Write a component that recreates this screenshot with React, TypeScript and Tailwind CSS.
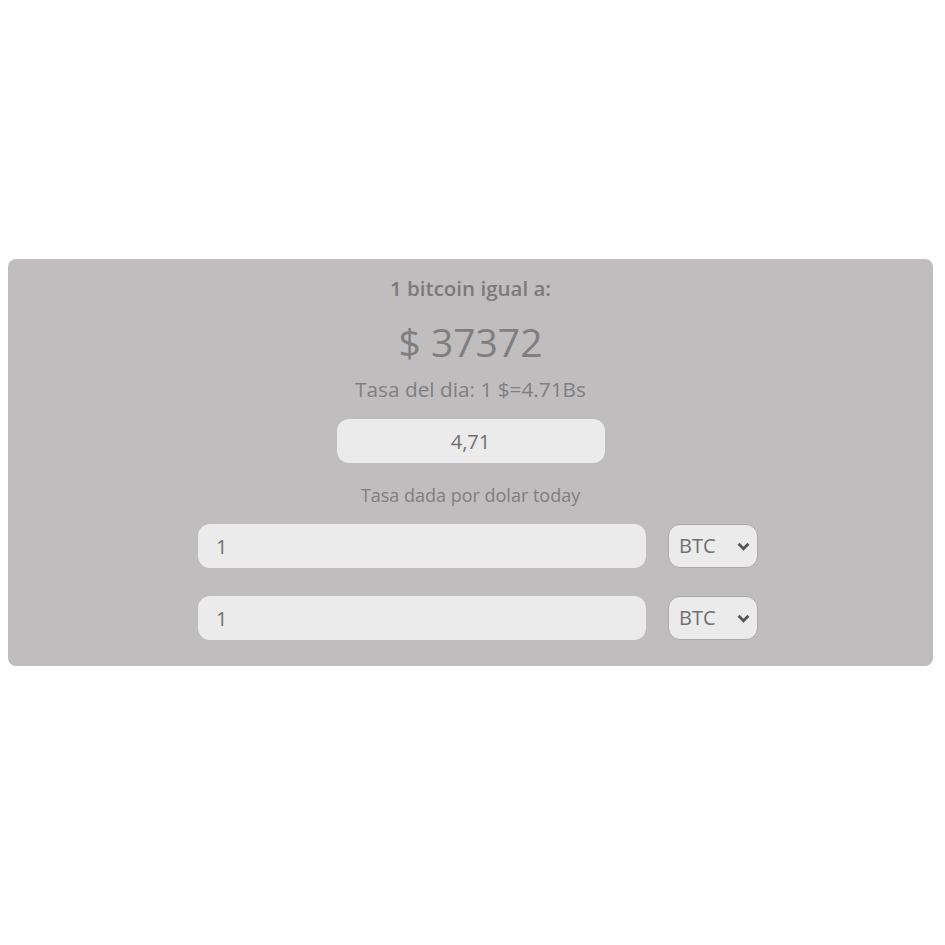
import React, {useState} from 'react';

const App: React.FC = () => {
    const [rate, setRate] = useState('4,71')
    const [from, setFrom] = useState('1')
    const [to, setTo] = useState('1')
    return (
        <div className="w-[945px] h-[945px] bg-white pt-[259px] px-[8px] font-['Open_Sans',sans-serif]">
            <div className="w-[925px] h-[407px] bg-[#bfbdbe] rounded-[8px] flex flex-col items-center text-[#7f7f7f]">
                <p className="mt-[16px] h-[26px] leading-[26px] text-[20.5px] font-semibold text-[#7a7a7a]">1 bitcoin igual a:</p>
                <p className="mt-[16px] h-[50px] leading-[50px] text-[39px]">$ 37372</p>
                <p className="mt-[8px] h-[28px] leading-[28px] text-[20.8px]">Tasa del dia: 1 $=4.71Bs</p>
                <input
                    value={rate}
                    onChange={(e)=>setRate(e.target.value)}
                    className="mt-[16px] w-[268px] h-[44px] rounded-[12px] bg-[#ebebeb] text-center text-[20px] text-[#707070] outline-none"
                />
                <p className="mt-[20px] h-[24px] leading-[24px] text-[18px]">Tasa dada por dolar today</p>
                <div className="mt-[17px] flex flex-col gap-[28px] pl-[15px]">
                    <div className="flex gap-[22px]">
                        <input value={from} onChange={(e)=>setFrom(e.target.value)}
                               className="w-[448px] h-[44px] rounded-[12px] bg-[#ebebeb] px-[18px] text-[20px] text-[#707070] outline-none"/>
                        <div className="relative w-[90px] h-[44px] rounded-[12px] bg-[#ebebeb] border border-[#a9a9a9] flex items-center pl-[10px] text-[20px] text-[#707070]">
                            BTC
                            <svg viewBox="0 0 12 8" className="absolute right-[7px] top-[17px] w-[13px] h-[9px]" fill="none" stroke="#555" strokeWidth="2.6"><polyline points="1.5,1.5 6,6 10.5,1.5"/></svg>
                        </div>
                    </div>
                    <div className="flex gap-[22px]">
                        <input value={to} onChange={(e)=>setTo(e.target.value)}
                               className="w-[448px] h-[44px] rounded-[12px] bg-[#ebebeb] px-[18px] text-[20px] text-[#707070] outline-none"/>
                        <div className="relative w-[90px] h-[44px] rounded-[12px] bg-[#ebebeb] border border-[#a9a9a9] flex items-center pl-[10px] text-[20px] text-[#707070]">
                            BTC
                            <svg viewBox="0 0 12 8" className="absolute right-[7px] top-[17px] w-[13px] h-[9px]" fill="none" stroke="#555" strokeWidth="2.6"><polyline points="1.5,1.5 6,6 10.5,1.5"/></svg>
                        </div>
                    </div>
                </div>
            </div>
        </div>
    );
};

export default App;
